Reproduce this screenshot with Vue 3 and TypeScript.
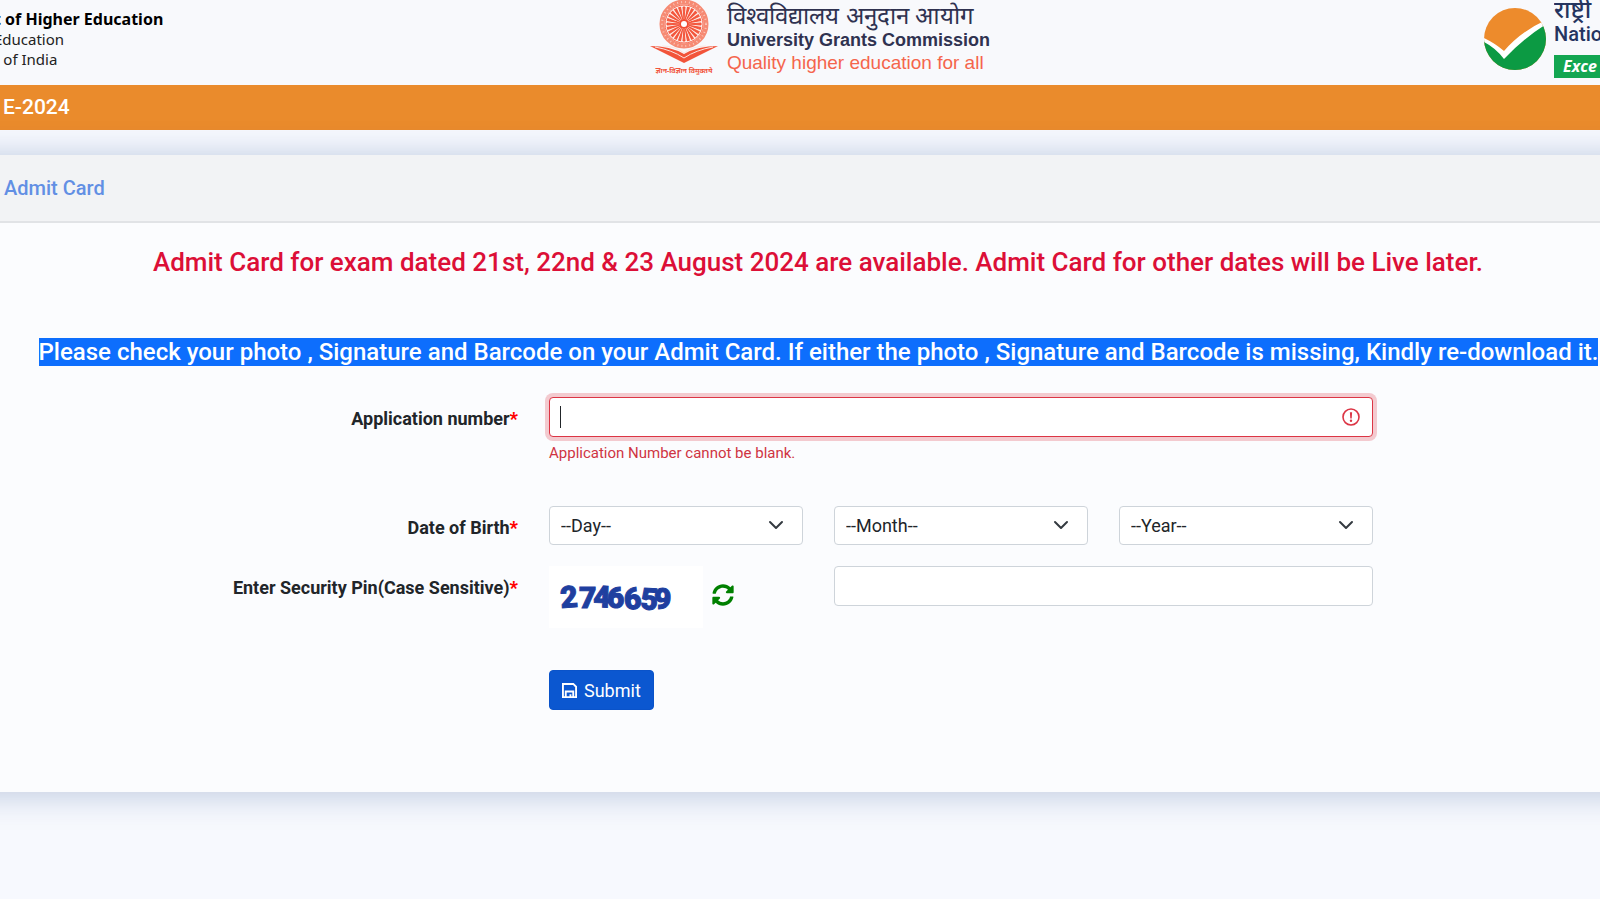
<script setup lang="ts">
import { ref } from 'vue'

const applicationNumber = ref('')
const pin = ref('')
const selects = [
  { id: 'day', name: 'Day of birth', placeholder: '--Day--' },
  { id: 'month', name: 'Month of birth', placeholder: '--Month--' },
  { id: 'year', name: 'Year of birth', placeholder: '--Year--' },
]
const spokes = Array.from({ length: 24 }, (_, i) => i * 15)
</script>

<template>
  <div class="page">
    <header class="brands">
      <div class="ministry">
        <strong>t of Higher Education</strong>
        <span>Education</span>
        <span>t of India</span>
      </div>
      <div class="ugc">
        <svg class="emblem" viewBox="0 0 68 76" aria-hidden="true">
          <circle cx="34" cy="24" r="22" fill="#fff" stroke="#f68a73" stroke-width="5" />
          <circle cx="34" cy="24" r="22" fill="none" stroke="#fbc4b8" stroke-width="2" stroke-dasharray="1 3" />
          <circle cx="34" cy="24" r="19" fill="#fdebe6" stroke="#f4654c" />
          <path
            v-for="a in spokes"
            :key="a"
            d="M34 19 L33 7 L35 7 Z"
            fill="#f3553b"
            stroke="#f3553b"
            stroke-width="1"
            :transform="`rotate(${a} 34 24)`"
          />
          <circle cx="34" cy="24" r="5" fill="#f24c32" />
          <circle cx="34" cy="24" r="3" fill="#fff" />
          <path d="M0 46 Q20 46 34 54 Q48 46 68 46 L34 63 Z" fill="#f2543a" />
          <path d="M5 47 Q22 50 34 58 Q46 50 63 47" fill="none" stroke="#fbe4df" stroke-width="1" />
          <path d="M12 46 Q25 46 34 53 Q43 46 56 46" fill="none" stroke="#fbe4df" stroke-width="1" />
          <text x="34" y="73" text-anchor="middle" class="motto">ज्ञान-विज्ञान विमुक्तये</text>
        </svg>
        <div class="ugc-text">
          <span class="hindi">विश्वविद्यालय अनुदान आयोग</span>
          <strong>University Grants Commission</strong>
          <span class="tagline">Quality higher education for all</span>
        </div>
      </div>
      <div class="nta">
        <svg class="nta-logo" viewBox="0 0 62 62" aria-hidden="true">
          <defs>
            <clipPath id="disc"><circle cx="31" cy="31" r="31" /></clipPath>
          </defs>
          <g clip-path="url(#disc)">
            <rect width="62" height="62" fill="#ed8b2c" />
            <path d="M-2 31 Q11 37 20 49 Q38 27 64 14 V64 H-2 Z" fill="#0c9a43" />
            <path d="M-2 29 Q11 35 20 43 Q37 23 64 11 V15 Q41 29 20 51 Q11 39 -2 33 Z" fill="#fff" />
          </g>
        </svg>
        <div class="nta-text">
          <span class="nta-hindi">राष्ट्री</span>
          <span class="nta-name">Natio</span>
          <em>Exce</em>
        </div>
      </div>
    </header>

    <div class="exam-bar">E-2024</div>

    <main class="card">
      <div class="card-head"><a href="#">Admit Card</a></div>
      <div class="card-body">
        <h1>Admit Card for exam dated 21st, 22nd &amp; 23 August 2024 are available. Admit Card for other dates will be Live later.</h1>
        <p class="notice">
          <mark>Please check your photo , Signature and Barcode on your Admit Card. If either the photo , Signature and Barcode is missing, Kindly re-download it.</mark>
        </p>

        <form @submit.prevent>
          <div class="row row-app">
            <label class="label" for="app-no">Application number<b>*</b></label>
            <div class="field">
              <div class="input-wrap">
                <input id="app-no" v-model="applicationNumber" class="control invalid" type="text" aria-describedby="app-error" />
                <span class="caret"></span>
                <svg class="alert" viewBox="0 0 18 18" aria-hidden="true">
                  <circle cx="9" cy="9" r="8" fill="none" stroke="#dc3545" stroke-width="1.6" />
                  <path d="M7.9 4.2 H10.1 L9.7 10.4 H8.3 Z" fill="#dc3545" />
                  <circle cx="9" cy="12.8" r="1.2" fill="#dc3545" />
                </svg>
              </div>
              <div id="app-error" class="error">Application Number cannot be blank.</div>
            </div>
          </div>

          <div class="row row-dob">
            <label class="label" for="day">Date of Birth<b>*</b></label>
            <div class="thirds">
              <div v-for="s in selects" :key="s.id" class="select-wrap">
                <select :id="s.id" class="control" :aria-label="s.name">
                  <option>{{ s.placeholder }}</option>
                </select>
                <svg class="chevron" viewBox="0 0 16 16" aria-hidden="true">
                  <path d="M2 5l6 6 6-6" fill="none" stroke="#343a40" stroke-width="2" stroke-linecap="round" stroke-linejoin="round" />
                </svg>
              </div>
            </div>
          </div>

          <div class="row row-pin">
            <label class="label" for="pin">Enter Security Pin(Case Sensitive)<b>*</b></label>
            <div class="thirds">
              <div class="captcha">
                <svg class="captcha-image" viewBox="0 0 154 62" role="img" aria-label="Security pin">
                  <rect width="154" height="62" fill="#fff" />
                  <text class="digits" x="12 30 44 58 76 91 105" y="42 42 41 42 44 43 43" rotate="-4 0 2 0 -6 4 0">2746659</text>
                </svg>
                <button type="button" class="refresh" aria-label="Refresh security pin">
                  <svg viewBox="0 0 512 512" aria-hidden="true">
                    <path fill="#008000" d="M370.7 133.3C339.5 104 298.9 88 255.8 88c-77.5.1-144.3 53.2-162.8 126.9-1.3 5.4-6.1 9.1-11.7 9.1H24.1c-7.5 0-13.2-6.8-11.8-14.2C33.9 94.9 134.8 8 256 8c66.4 0 126.8 26.1 171.3 68.7L463 41c15.1-15.1 41-4.4 41 17v134c0 13.3-10.7 24-24 24H346c-21.4 0-32.1-25.9-17-41l41.7-41.7zM32 296h134c21.4 0 32.1 25.9 17 41l-41.8 41.8c31.3 29.3 71.8 45.3 114.9 45.3 77.4-.1 144.3-53.1 162.8-126.8 1.3-5.4 6.1-9.1 11.7-9.1h57.3c7.5 0 13.2 6.8 11.8 14.2C478.1 417.1 377.2 504 256 504c-66.4 0-126.8-26.1-171.3-68.7L49 471c-15.1 15.1-41 4.4-41-17V320c0-13.3 10.7-24 24-24z" />
                  </svg>
                </button>
              </div>
              <input id="pin" v-model="pin" class="control pin" type="text" />
            </div>
          </div>

          <div class="row">
            <span></span>
            <div>
              <button type="submit" class="submit">
                <svg viewBox="0 0 16 16" aria-hidden="true">
                  <path d="M1 1 H12 L15 4 V15 H1 Z M4 15 V9 H12 V15" fill="none" stroke="#fff" stroke-width="2" />
                  <path d="M8 12 H10 V15 H8 Z" fill="#fff" />
                </svg>
                Submit
              </button>
            </div>
          </div>
        </form>
      </div>
    </main>
  </div>
</template>

<style>
body {
  margin: 0;
  background: #f7f9fe;
}
</style>

<style scoped>
.page {
  min-height: 100vh;
  overflow-x: clip;
  font-family: Roboto, "Noto Sans", sans-serif;
  font-size: 18px;
  color: #212529;
}
.page * {
  box-sizing: border-box;
}
.brands {
  display: grid;
  grid-template-columns: 650fr 340fr 610fr;
  height: 85px;
  overflow: hidden;
  background: #f8f9fc;
}
.ministry {
  display: flex;
  flex-direction: column;
  margin-left: -6px;
  padding-top: 9px;
  font-family: "Noto Sans", sans-serif;
  font-size: 15px;
  line-height: 20px;
  color: #222;
  white-space: nowrap;
}
.ministry strong {
  font-size: 16px;
  color: #000;
}
.ugc {
  display: flex;
  gap: 9px;
}
.emblem {
  flex: none;
  width: 68px;
  height: 76px;
}
.motto {
  font: bold 7px "Noto Sans", sans-serif;
  fill: #f2543a;
}
.ugc-text {
  display: flex;
  flex-direction: column;
  padding-top: 2px;
  font-family: "Liberation Sans", Arial, sans-serif;
  font-size: 18px;
  line-height: 23px;
  color: #2f3250;
  white-space: nowrap;
}
.hindi {
  font-size: 24px;
  font-weight: 500;
  line-height: 27px;
}
.tagline {
  font-size: 19px;
  line-height: 22px;
  color: #f5654c;
}
.nta {
  display: flex;
  justify-content: flex-end;
  gap: 8px;
}
.nta-logo {
  width: 62px;
  height: 62px;
  margin-top: 8px;
}
.nta-text {
  width: 46px;
  overflow: hidden;
  display: flex;
  flex-direction: column;
  white-space: nowrap;
  color: #25345f;
}
.nta-hindi {
  font-size: 24px;
  font-weight: 500;
  line-height: 20px;
}
.nta-name {
  font-size: 20px;
  font-weight: 500;
  line-height: 28px;
}
.nta-text em {
  margin-top: 7px;
  padding-left: 9px;
  background: #13a651;
  color: #fff;
  font: italic bold 16px/23px "Open Sans", sans-serif;
}
.exam-bar {
  padding-left: 3px;
  background: #ea8b2c;
  color: #fff;
  font-size: 21px;
  font-weight: 500;
  line-height: 45px;
}
.card {
  margin: 25px -48px 0;
  background: #fbfcfe;
  box-shadow: 0 2px 32px rgba(8, 50, 123, 0.25);
}
.card-head {
  padding: 0 52px;
  background: #f2f3f5;
  border-bottom: 2px solid #e1e3e6;
  line-height: 66px;
  font-size: 20px;
  font-weight: 500;
}
.card-head a {
  color: #628fe4;
  text-decoration: none;
}
.card-body {
  padding: 23px 48px 82px;
}
h1 {
  margin: 0;
  padding-left: 36px;
  text-align: center;
  font-size: 26px;
  font-weight: 500;
  line-height: 32px;
  color: #dc0f37;
}
.notice {
  margin: 58px 0 0;
  padding-left: 37px;
  text-align: center;
  font-size: 24px;
  font-weight: 500;
  line-height: 32px;
}
.notice mark {
  background: #0d6efd;
  color: #fff;
}
form {
  padding-top: 29px;
}
.row {
  display: grid;
  grid-template-columns: 518fr 824fr 196fr;
  column-gap: 31px;
  align-items: start;
}
.row-app {
  margin-bottom: 43px;
}
.row-dob {
  margin-bottom: 21px;
}
.row-pin {
  margin-bottom: 42px;
}
.label {
  padding-top: 10px;
  text-align: right;
  font-weight: 700;
  line-height: 24px;
}
.label b {
  color: #f00;
}
.input-wrap,
.select-wrap {
  position: relative;
}
.control {
  display: block;
  width: 100%;
  height: 40px;
  padding: 0 11px;
  border: 1px solid #ced4da;
  border-radius: 4px;
  background: #fff;
  color: #212529;
  font-family: inherit;
  font-size: 18px;
  appearance: none;
  outline: none;
}
select.control {
  height: 39px;
}
.invalid {
  border-color: #dc3545;
  box-shadow: 0 0 0 4px rgba(220, 53, 69, 0.25);
}
.caret {
  position: absolute;
  left: 11px;
  top: 9px;
  width: 1px;
  height: 22px;
  background: #212529;
}
.alert {
  position: absolute;
  right: 13px;
  top: 11px;
  width: 18px;
  height: 18px;
}
.error {
  padding-top: 6px;
  color: #cf3443;
  font-size: 15px;
  line-height: 20px;
}
.thirds {
  display: grid;
  grid-template-columns: repeat(3, 1fr);
  column-gap: 31px;
  align-items: start;
}
.chevron {
  position: absolute;
  right: 19px;
  top: 11px;
  width: 16px;
  height: 16px;
}
.captcha {
  display: flex;
  gap: 9px;
  align-items: flex-start;
}
.captcha-image {
  width: 154px;
  height: 62px;
}
.digits {
  font: 900 30px Roboto, sans-serif;
  fill: #1f3f9f;
  stroke: #1f3f9f;
  stroke-width: 1px;
}
.refresh {
  width: 22px;
  height: 22px;
  margin-top: 18px;
  padding: 0;
  border: 0;
  background: none;
}
.refresh svg {
  display: block;
  width: 22px;
  height: 22px;
}
.pin {
  grid-column: 2 / 4;
}
.submit {
  display: inline-flex;
  align-items: center;
  gap: 7px;
  height: 40px;
  padding: 0 12px;
  border: 1px solid #0a53c9;
  border-radius: 4px;
  background: #0b57d0;
  color: #fff;
  font-family: inherit;
  font-size: 18px;
}
.submit svg {
  width: 15px;
  height: 15px;
}
</style>
